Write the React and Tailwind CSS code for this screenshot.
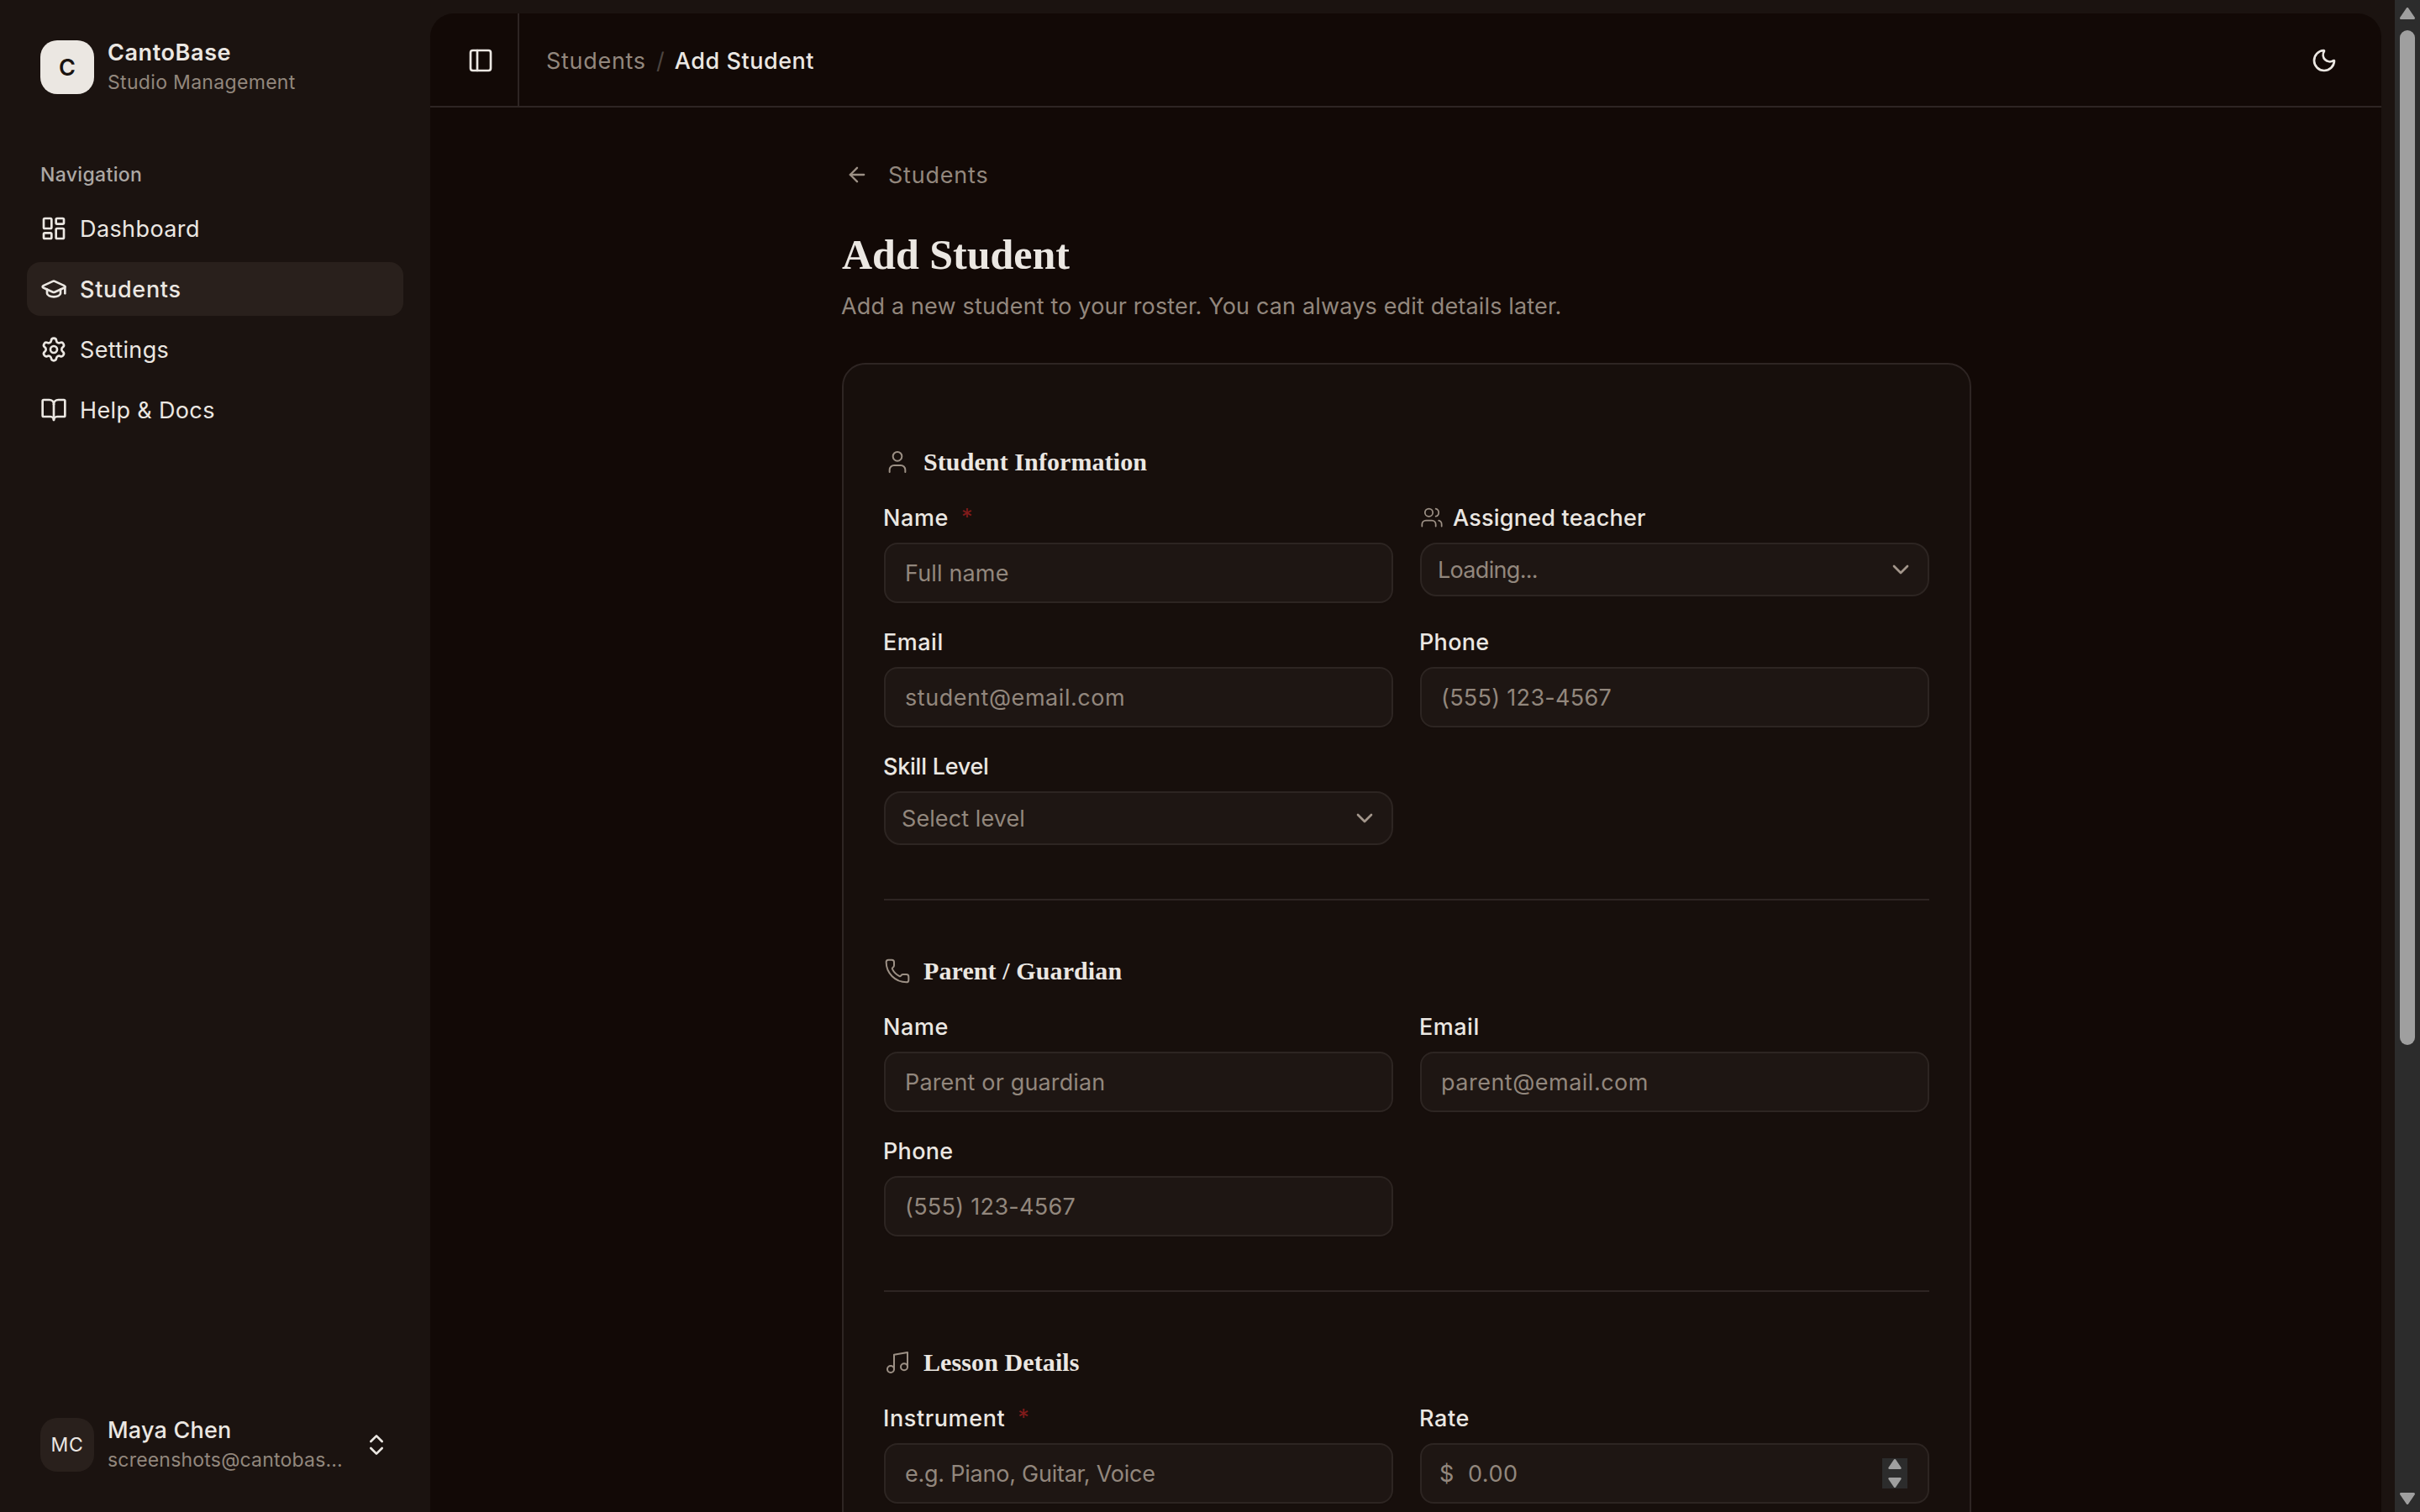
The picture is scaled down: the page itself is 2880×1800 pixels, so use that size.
import React from 'react';
import {
    ArrowLeft,
    BookOpen,
    ChevronDown,
    ChevronsUpDown,
    GraduationCap,
    LayoutDashboard,
    Moon,
    Music,
    PanelLeft,
    Phone,
    Settings,
    User,
    Users,
} from 'lucide-react';

const navItems = [
    { label: 'Dashboard', icon: LayoutDashboard, tracking: 'tracking-[0.4px]' },
    { label: 'Students', icon: GraduationCap, tracking: 'tracking-[0.7px]', active: true },
    { label: 'Settings', icon: Settings, tracking: 'tracking-[0.35px]' },
    { label: 'Help & Docs', icon: BookOpen, tracking: 'tracking-[0.36px]' },
];

function Sidebar() {
    return (
        <aside className="w-[512px] shrink-0 flex flex-col">
            {/* Brand */}
            <div className="flex items-center gap-4 px-12 pt-[45px]">
                <div className="size-16 shrink-0 rounded-[20px] bg-[#ebe7e2] text-[#1a1310] flex items-center justify-center pt-0.5 text-[27px] font-semibold">
                    C
                </div>
                <div className="flex flex-col">
                    <span className="text-[27px] leading-[36px] font-semibold tracking-[0.6px]">CantoBase</span>
                    <span className="text-[23px] leading-[34px] tracking-[0.32px] text-[#92877d]">Studio Management</span>
                </div>
            </div>

            {/* Navigation */}
            <div className="px-8 pt-[61px]">
                <div className="h-16 px-4 flex items-center text-[23px] font-medium tracking-[0.35px] text-[#aca8a4]">Navigation</div>
                <nav className="flex flex-col gap-2">
                    {navItems.map(({ label, icon: Icon, tracking, active }) => (
                        <a
                            key={label}
                            href="#"
                            className={`h-16 flex items-center gap-4 px-4 rounded-2xl text-[27px] ${tracking} ${active ? 'bg-[#29201c] font-medium' : ''}`}
                        >
                            <Icon className="size-8 shrink-0" />
                            <span className="pt-0.5 -ml-px">{label}</span>
                        </a>
                    ))}
                </nav>
            </div>

            {/* Account */}
            <div className="mt-auto px-12 pb-[45px] flex items-center gap-4">
                <div className="size-16 shrink-0 rounded-[20px] bg-[#29201c] flex items-center justify-center text-[23px] tracking-[0.6px]">
                    MC
                </div>
                <div className="w-[296px] flex flex-col">
                    <span className="text-[27px] leading-[36px] font-medium tracking-[0.2px]">Maya Chen</span>
                    <span className="text-[23px] leading-[34px] tracking-[0.2px] text-[#92877d]">screenshots@cantobas...</span>
                </div>
                <ChevronsUpDown className="size-8 shrink-0 -ml-2" />
            </div>
        </aside>
    );
}

function Header() {
    return (
        <header className="h-28 shrink-0 flex border-b-2 border-[#2e2523]">
            <div className="w-[106px] border-r-2 border-[#2e2523] pl-11 pt-0.5 flex items-center">
                <PanelLeft className="size-8" />
            </div>
            <div className="flex-1 pl-8 pr-[52px] pt-0.5 flex items-center justify-between">
                <div className="flex items-center pt-0.5 text-[27px]">
                    <span className="tracking-[0.7px] text-[#92877d]">Students</span>
                    <span className="w-[34px] text-center text-[#4d4540]">/</span>
                    <span className="font-medium tracking-[0.54px]">Add Student</span>
                </div>
                <Moon className="size-8" />
            </div>
        </header>
    );
}

function SectionHeading({ icon: Icon, children }) {
    return (
        <div className="h-10 mb-8 flex items-center gap-4">
            <Icon className="size-8 text-[#9c9085]" strokeWidth={1.5} />
            <h2 className="pb-0.5 -ml-px font-['Liberation_Serif',serif] text-[30px] font-bold tracking-[0.1px]">{children}</h2>
        </div>
    );
}

function Label({ children, tracking, icon: Icon, required }) {
    return (
        <div className="h-7 flex items-center text-[27px] font-medium whitespace-nowrap">
            {Icon && <Icon className="size-7 mr-3 text-[#9c9085]" strokeWidth={1.5} />}
            <span className={`pt-0.5 -ml-px ${tracking}`}>{children}</span>
            {required && <span className="ml-[15px] pt-px font-normal text-[#811b1b]">*</span>}
        </div>
    );
}

function Field({ label, labelTracking, placeholder, tracking, required }) {
    return (
        <div className="flex flex-col gap-4">
            <Label tracking={labelTracking} required={required}>{label}</Label>
            <div className="h-[72px] px-6 flex items-center rounded-2xl border-2 border-[#2d2522] bg-[#1e1613] shadow-xs text-[27px] text-[#92877d]">
                <span className={`pt-0.5 -ml-px ${tracking}`}>{placeholder}</span>
            </div>
        </div>
    );
}

function SelectField({ label, labelTracking, icon, value, tracking }) {
    return (
        <div className="flex flex-col gap-4">
            <Label tracking={labelTracking} icon={icon}>{label}</Label>
            <div className="h-16 pl-5 pr-4 flex items-center justify-between rounded-[20px] border-2 border-[#2d2522] bg-[#1e1613] text-[27px] text-[#92877d]">
                <span className={`pt-0.5 -ml-px ${tracking}`}>{value}</span>
                <ChevronDown className="size-8 text-[#a3968b]" />
            </div>
        </div>
    );
}

function Triangle({ down, className }) {
    return (
        <svg viewBox="0 0 18 14" className={className}>
            <path
                d={down ? 'M1.5 1.5h15L9 12.5z' : 'M1.5 12.5h15L9 1.5z'}
                fill="#9f9f9f"
                stroke="#9f9f9f"
                strokeWidth="3"
                strokeLinejoin="round"
            />
        </svg>
    );
}

function RateField() {
    return (
        <div className="flex flex-col gap-4">
            <Label tracking="tracking-[0.6px]">Rate</Label>
            <div className="h-[72px] pl-[21px] pr-6 flex items-center rounded-2xl border-2 border-[#2d2522] bg-[#1e1613] text-[27px] text-[#92877d]">
                <span className="w-[34px] pt-0.5">$</span>
                <span className="pt-0.5 tracking-[0.5px]">0.00</span>
                <div className="ml-auto w-[30px] h-9 bg-[#2c2c2c] flex flex-col items-center justify-between py-px">
                    <Triangle className="w-4 h-3" />
                    <Triangle down className="w-4 h-3" />
                </div>
            </div>
        </div>
    );
}

function Scrollbar() {
    return (
        <div className="w-[30px] shrink-0 bg-[#2c2c2c] flex flex-col items-center pt-[9px] pb-[9px]">
            <Triangle className="w-[18px] h-[14px]" />
            <div className="mt-[13px] w-[18px] h-[1208px] rounded-full bg-[#9f9f9f]"></div>
            <Triangle down className="mt-auto w-[18px] h-[14px]" />
        </div>
    );
}

export default function App() {
    return (
        <div className="w-[2880px] h-[1800px] flex overflow-hidden bg-[#1b1310] font-['Inter',sans-serif] text-[#ebe7e2]">
            <Sidebar />

            <main className="flex-1 mt-4 mr-4 flex flex-col overflow-hidden rounded-t-[28px] bg-[#120906]">
                <Header />

                <div className="w-[1344px] ml-[490px] pt-[52px]">
                    <a href="#" className="h-14 pl-1 flex items-center text-[27px] text-[#92877d]">
                        <ArrowLeft className="size-7 mr-[23px] text-[#9c9085]" />
                        <span className="pt-0.5 tracking-[0.79px]">Students</span>
                    </a>

                    <h1 className="mt-[37px] font-['Liberation_Serif',serif] text-[50px] leading-[60px] font-bold">Add Student</h1>
                    <p className="mt-3 -ml-px text-[27px] leading-[40px] tracking-[0.16px] text-[#92877d]">
                        Add a new student to your roster. You can always edit details later.
                    </p>

                    {/* Form card, runs past the bottom of the viewport */}
                    <div className="mt-[47px] h-[1600px] px-12 pt-24 rounded-[28px] border-2 border-[#2e2523] bg-[#170f0c]">
                        <section>
                            <SectionHeading icon={User}>Student Information</SectionHeading>
                            <div className="grid grid-cols-2 gap-8">
                                <Field label="Name" labelTracking="tracking-[0.6px]" placeholder="Full name" tracking="tracking-[0.15px]" required />
                                <SelectField label="Assigned teacher" labelTracking="tracking-[0.22px]" icon={Users} value="Loading..." tracking="tracking-[-0.69px]" />
                                <Field label="Email" labelTracking="tracking-[0.5px]" placeholder="student@email.com" tracking="tracking-[0.55px]" />
                                <Field label="Phone" labelTracking="tracking-[0.3px]" placeholder="(555) 123-4567" tracking="tracking-[0.3px]" />
                                <SelectField label="Skill Level" labelTracking="tracking-[-0.25px]" value="Select level" tracking="tracking-[0.08px]" />
                            </div>
                        </section>

                        <div className="my-16 h-0.5 bg-[#2e2523]"></div>

                        <section>
                            <SectionHeading icon={Phone}>Parent / Guardian</SectionHeading>
                            <div className="grid grid-cols-2 gap-8">
                                <Field label="Name" labelTracking="tracking-[0.6px]" placeholder="Parent or guardian" tracking="tracking-[0.15px]" />
                                <Field label="Email" labelTracking="tracking-[0.5px]" placeholder="parent@email.com" tracking="tracking-[0.5px]" />
                                <Field label="Phone" labelTracking="tracking-[0.3px]" placeholder="(555) 123-4567" tracking="tracking-[0.3px]" />
                            </div>
                        </section>

                        <div className="my-16 h-0.5 bg-[#2e2523]"></div>

                        <section>
                            <SectionHeading icon={Music}>Lesson Details</SectionHeading>
                            <div className="grid grid-cols-2 gap-8">
                                <Field label="Instrument" labelTracking="tracking-[0.6px]" placeholder="e.g. Piano, Guitar, Voice" tracking="tracking-[-0.24px]" required />
                                <RateField />
                            </div>
                        </section>
                    </div>
                </div>
            </main>

            <Scrollbar />
        </div>
    );
}
